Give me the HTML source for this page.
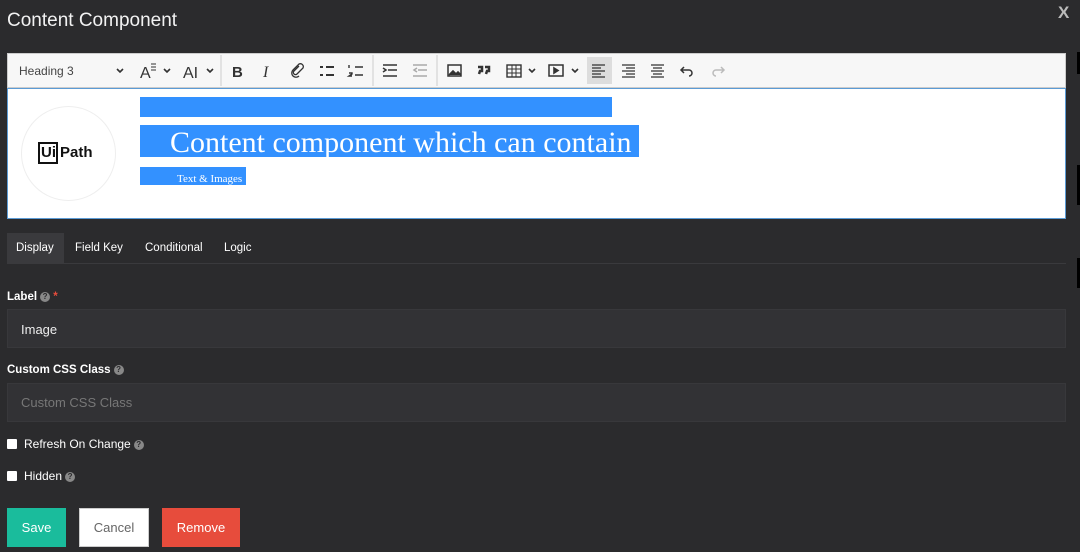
<!DOCTYPE html>
<html><head><meta charset="utf-8"><style>
*{box-sizing:border-box;margin:0;padding:0}
body{width:1080px;height:552px;background:#2b2b2d;font-family:"Liberation Sans",sans-serif;position:relative;overflow:hidden;color:#fff}
.a{position:absolute}
.t{font-size:12px;color:#fff}
.q{display:inline-block;width:10px;height:10px;border-radius:50%;background:#888;color:#2b2b2d;font-size:8px;line-height:10px;text-align:center;font-weight:bold;vertical-align:middle;margin-left:3px}
.cb{position:absolute;width:10px;height:10px;background:#fff;border-radius:1px}
</style></head><body>
<div class="a" style="left:7px;top:10px;font-size:19px;color:#f2f2f2">Content Component</div>
<div class="a" style="left:1058px;top:3px;font-size:17px;color:#bbb;font-weight:bold">X</div>
<div class="a" style="left:1077px;top:52px;width:3px;height:22px;background:#000"></div>
<div class="a" style="left:1077px;top:165px;width:3px;height:40px;background:#000"></div>
<div class="a" style="left:1077px;top:258px;width:3px;height:30px;background:#000"></div>

<!-- editor -->
<div class="a" style="left:7px;top:53px;width:1059px;height:35px;background:#f7f7f7;border:1px solid #ccc"></div>
<div class="a" style="left:7px;top:88px;width:1059px;height:131px;background:#fff;border:1px solid #5b9bd5"></div>
<svg class="a" style="left:0;top:53px" width="740" height="35" viewBox="0 53 740 35" fill="none" stroke="#333" stroke-width="1.6">
<text x="19" y="75" font-family="Liberation Sans" font-size="12" fill="#444" stroke="none">Heading 3</text>
<path d="M117 69l3 3 3-3M164 69l3 3 3-3M207 69l3 3 3-3M529 69l3 3 3-3M572 69l3 3 3-3"/>
<text x="140" y="78" font-family="Liberation Sans" font-size="16" fill="#333" stroke="none">A</text>
<path d="M151 64h5M151 67h5M151 70h5" stroke-width="1"/>
<text x="183" y="78" font-family="Liberation Sans" font-size="16" fill="#333" stroke="none">AI</text>
<path d="M221 55v31M373 55v31M437 55v31" stroke="#ccc" stroke-width="1"/>
<text x="232" y="77" font-family="Liberation Sans" font-size="15" font-weight="bold" fill="#333" stroke="none">B</text>
<text x="263" y="77" font-family="Liberation Serif" font-size="16" font-style="italic" fill="#333" stroke="none">I</text>
<path d="M299 66l-5 5a2 2 0 0 0 3 3l6-6a3 3 0 0 0-4-4l-6 6a4 4 0 0 0 6 6" stroke-width="1.3"/>
<path d="M320 67h3M320 75h3M326 67h8M326 75h8" stroke-width="2"/>
<path d="M349 65v3M349 73h3v1l-3 2h3M355 67h8M355 75h8" stroke-width="1.4"/>
<path d="M383 65h14M388 70h9M383 76h14M383 68l3 2-3 2" stroke-width="1.5"/>
<path d="M413 65h14M418 70h9M413 76h14M417 68l-3 2 3 2" stroke="#aaa" stroke-width="1.5"/>
<rect x="448" y="65" width="13" height="11" stroke-width="1.5"/><path d="M449 75l4-4 3 3 2-2 3 3" fill="#333"/>
<path d="M478 67h4v4h-2l-1 3M485 67h4v4h-2l-1 3" stroke-width="2.5"/>
<rect x="507" y="65" width="14" height="12" stroke-width="1.4"/><path d="M507 69h14M507 73h14M512 65v12M516 65v12" stroke-width="1"/>
<rect x="549" y="65" width="14" height="11" stroke-width="1.5"/><path d="M554 68l4 2.5-4 2.5z" fill="#333"/>
<rect x="587" y="57" width="25" height="27" fill="#ddd" stroke="none"/>
<path d="M592 65h13M592 68h9M592 71h13M592 74h9M592 77h13" stroke-width="1.3"/>
<path d="M622 65h13M626 68h9M622 71h13M626 74h9M622 77h13" stroke-width="1.3"/>
<path d="M651 65h13M653 68h9M651 71h13M653 74h9M651 77h13" stroke-width="1.3"/>
<path d="M684 67l-3 3 3 3M681 70h8a3 3 0 0 1 0 6" stroke-width="1.5"/>
<path d="M721 67l3 3-3 3M724 70h-8a3 3 0 0 0 0 6" stroke="#bbb" stroke-width="1.5"/>
</svg>
<!-- logo -->
<div class="a" style="left:21px;top:106px;width:95px;height:95px;border-radius:50%;border:1px solid #eee"></div>
<div class="a" style="left:38px;top:142px;width:20px;height:22px;border:2px solid #111"></div>
<div class="a" style="left:41px;top:144px;font-size:15px;color:#111;font-weight:bold">Ui</div>
<div class="a" style="left:60px;top:144px;font-size:15px;color:#111;font-weight:bold">Path</div>
<div class="a" style="left:140px;top:97px;width:472px;height:20px;background:#3391ff"></div>
<div class="a" style="left:140px;top:125px;width:499px;height:32px;background:#3391ff"></div>
<div class="a" style="left:170px;top:126px;font-family:'Liberation Serif',serif;font-size:30px;color:#fff;white-space:nowrap">Content component which can contain</div>
<div class="a" style="left:140px;top:167px;width:106px;height:18px;background:#3391ff"></div>
<div class="a" style="left:177px;top:173px;font-family:'Liberation Serif',serif;font-size:11px;color:#fff">Text &amp; Images</div>

<!-- tabs -->
<div class="a" style="left:7px;top:233px;width:57px;height:30px;background:#3a3a3d"></div>
<div class="a t" style="left:16px;top:242px;font-size:11.5px">Display</div>
<div class="a t" style="left:75px;top:242px;font-size:11.5px">Field Key</div>
<div class="a t" style="left:145px;top:242px;font-size:11.5px">Conditional</div>
<div class="a t" style="left:224px;top:242px;font-size:11.5px">Logic</div>
<div class="a" style="left:7px;top:263px;width:1059px;height:1px;background:#3a3a3d"></div>

<div class="a t" style="left:7px;top:291px;font-size:11.5px;font-weight:bold">Label<span class="q">?</span> <span style="color:#e74c3c">*</span></div>
<div class="a" style="left:7px;top:309px;width:1059px;height:39px;background:#323235;border:1px solid #38383b"></div>
<div class="a" style="left:21px;top:322px;font-size:13px;color:#eee">Image</div>
<div class="a t" style="left:7px;top:364px;font-size:11.5px;font-weight:bold">Custom CSS Class<span class="q">?</span></div>
<div class="a" style="left:7px;top:383px;width:1059px;height:39px;background:#323235;border:1px solid #38383b"></div>
<div class="a" style="left:21px;top:395px;font-size:13px;color:#777">Custom CSS Class</div>
<div class="cb" style="left:7px;top:439px"></div>
<div class="a t" style="left:24px;top:437px;font-size:12px">Refresh On Change<span class="q">?</span></div>
<div class="cb" style="left:7px;top:471px"></div>
<div class="a t" style="left:24px;top:469px;font-size:12px">Hidden<span class="q">?</span></div>

<div class="a" style="left:7px;top:508px;width:59px;height:39px;background:#1abc9c;font-size:13px;color:#fff;text-align:center;line-height:39px">Save</div>
<div class="a" style="left:79px;top:508px;width:70px;height:39px;background:#fff;border:1px solid #ccc;font-size:13px;color:#666;text-align:center;line-height:37px">Cancel</div>
<div class="a" style="left:162px;top:508px;width:78px;height:39px;background:#e74c3c;font-size:13px;color:#fff;text-align:center;line-height:39px">Remove</div>
</body></html>
